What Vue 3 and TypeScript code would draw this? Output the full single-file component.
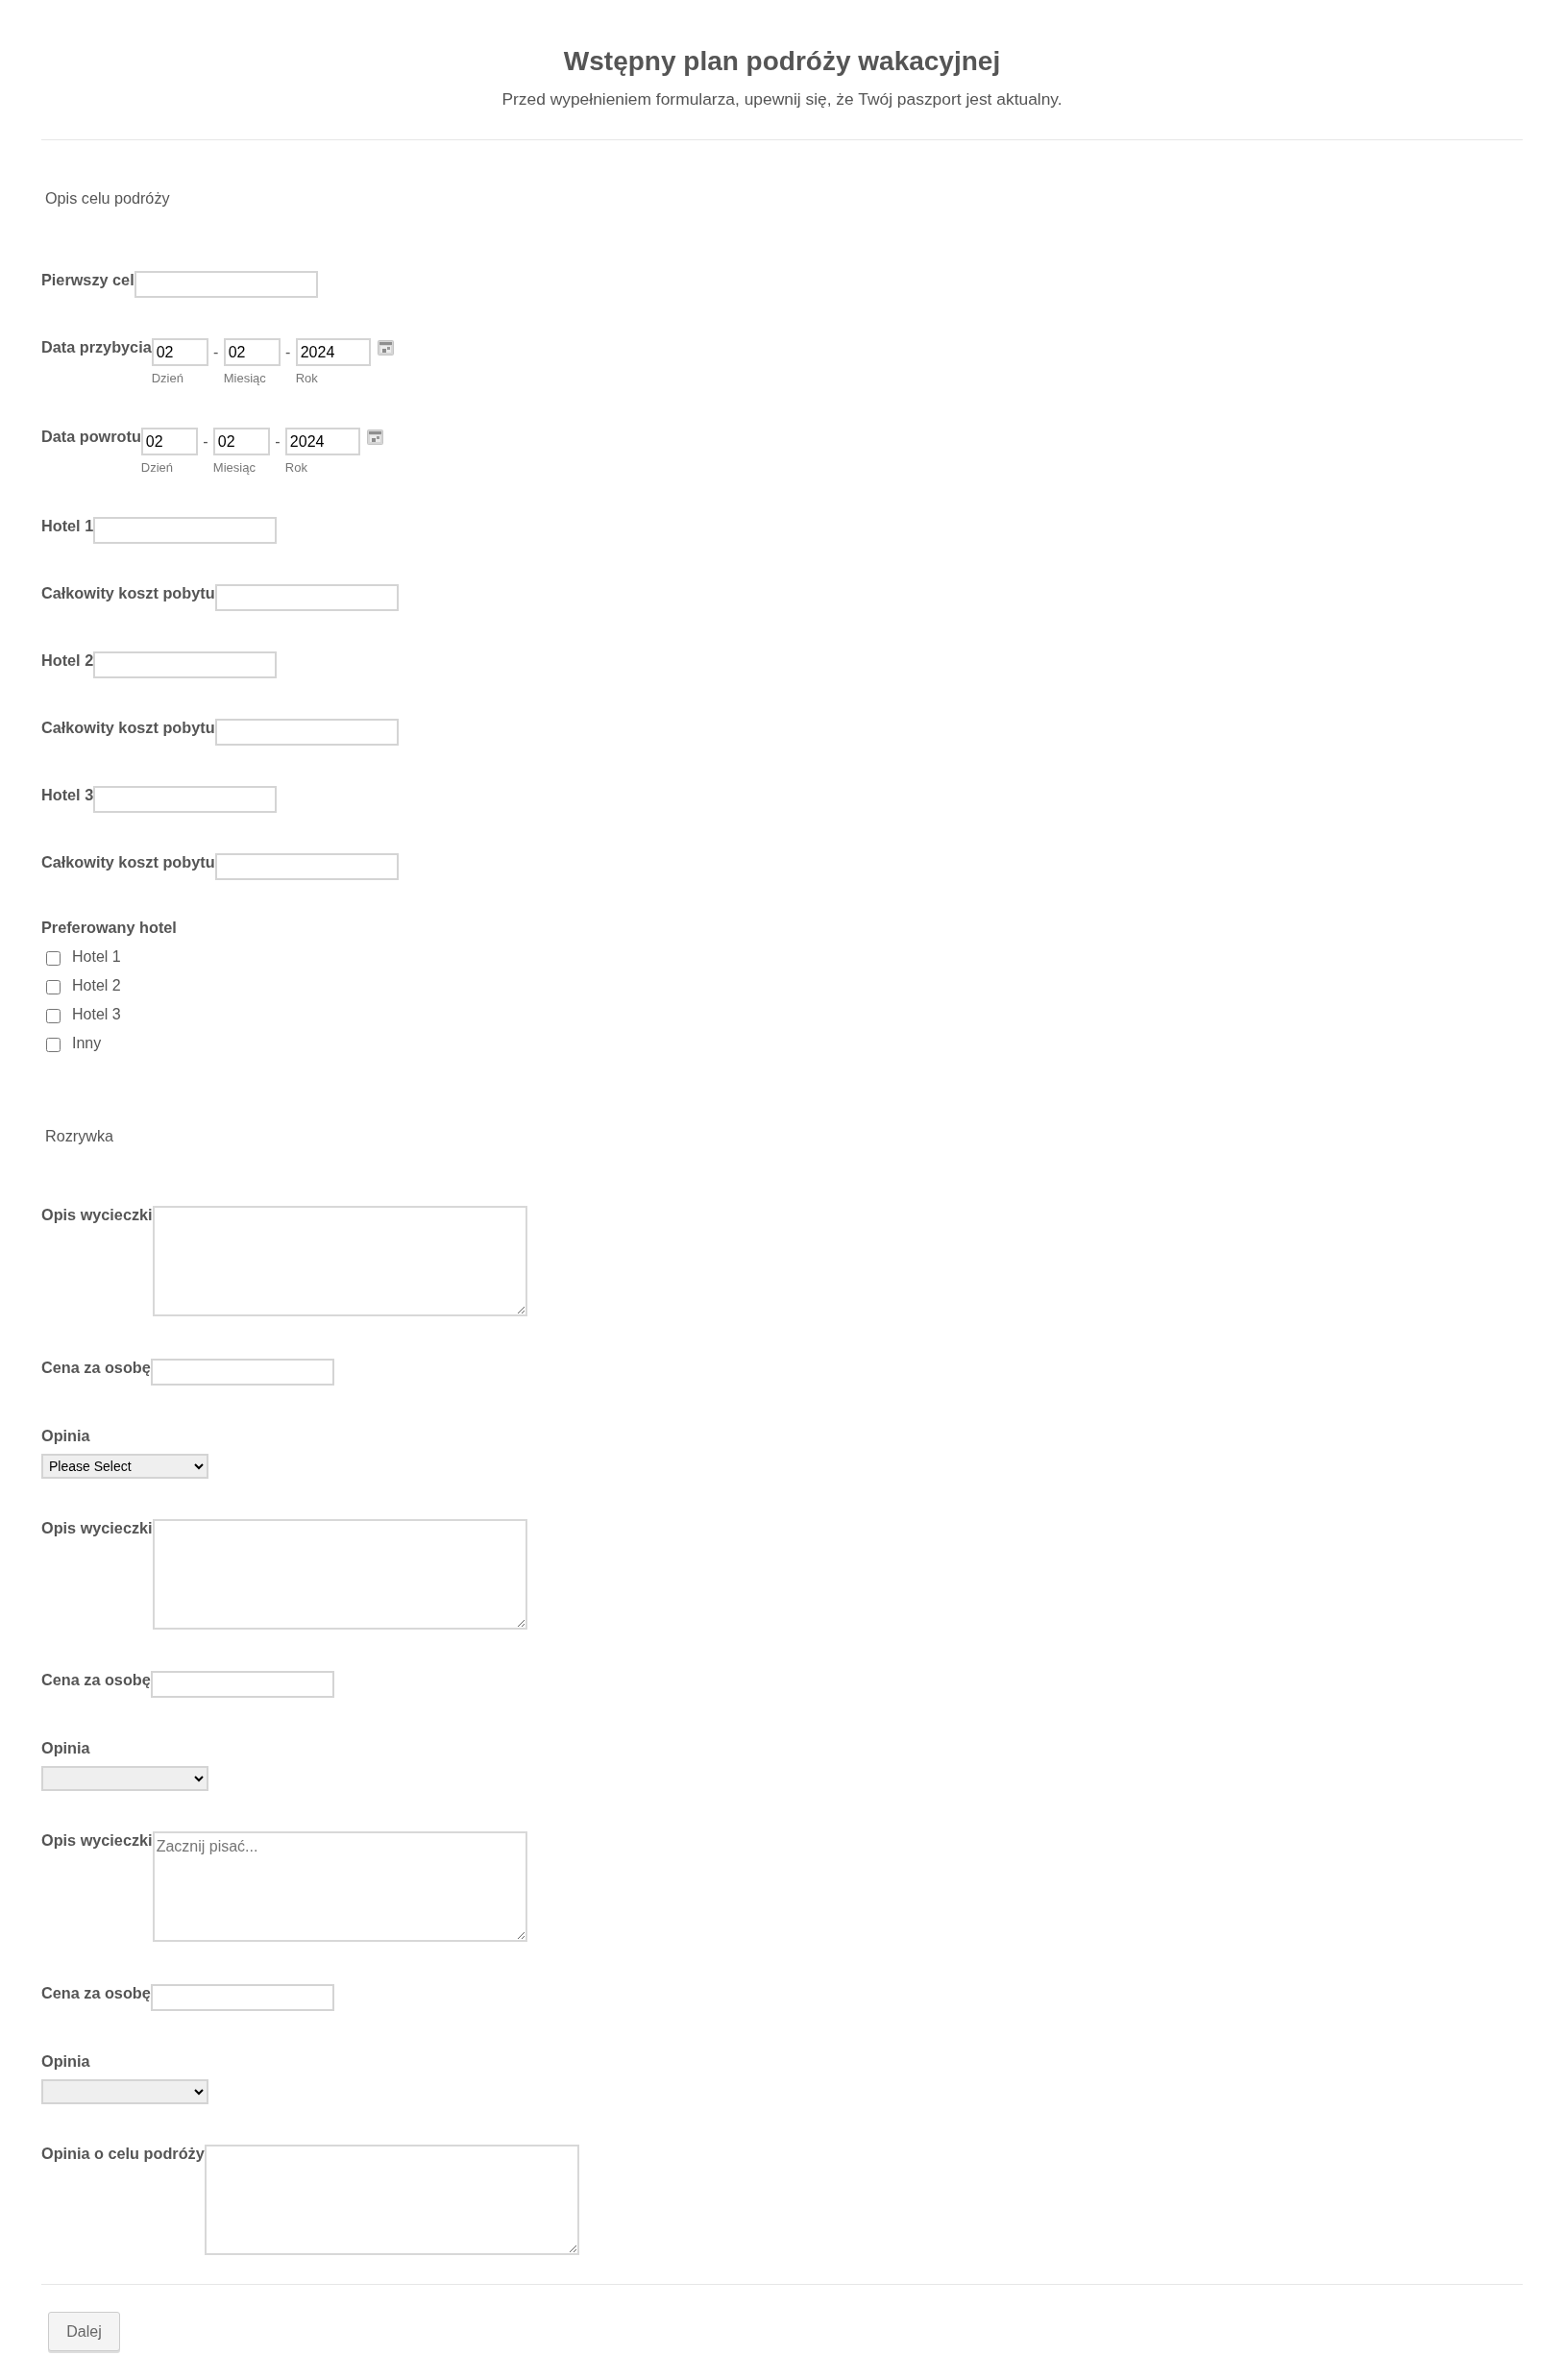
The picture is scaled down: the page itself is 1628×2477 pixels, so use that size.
<script setup lang="ts">
type Field =
  | { kind: 'text' | 'area' | 'select' | 'date'; label: string; value?: string; placeholder?: string }

const stay = (n: number): Field[] => [
  { kind: 'text', label: `Hotel ${n}` },
  { kind: 'text', label: 'Całkowity koszt pobytu' },
]

const tripFields: Field[] = [
  { kind: 'text', label: 'Pierwszy cel' },
  { kind: 'date', label: 'Data przybycia' },
  { kind: 'date', label: 'Data powrotu' },
  ...stay(1),
  ...stay(2),
  ...stay(3),
]

const funFields: Field[] = [
  { kind: 'area', label: 'Opis wycieczki' },
  { kind: 'text', label: 'Cena za osobę' },
  { kind: 'select', label: 'Opinia', value: 'Please Select' },
  { kind: 'area', label: 'Opis wycieczki' },
  { kind: 'text', label: 'Cena za osobę' },
  { kind: 'select', label: 'Opinia', value: '' },
  { kind: 'area', label: 'Opis wycieczki', placeholder: 'Zacznij pisać...' },
  { kind: 'text', label: 'Cena za osobę' },
  { kind: 'select', label: 'Opinia', value: '' },
  { kind: 'area', label: 'Opinia o celu podróży' },
]

const hotels = ['Hotel 1', 'Hotel 2', 'Hotel 3', 'Inny']
</script>

<template>
  <form class="page" @submit.prevent>
    <header class="form-head">
      <h1>Wstępny plan podróży wakacyjnej</h1>
      <p>Przed wypełnieniem formularza, upewnij się, że Twój paszport jest aktualny.</p>
    </header>

    <h2 class="section-title first">Opis celu podróży</h2>

    <div class="fields">
      <div v-for="(f, i) in tripFields" :key="i" class="row">
        <label class="row-label">{{ f.label }}</label>
        <input v-if="f.kind === 'text'" class="text-input" type="text" />
        <div v-else class="date">
          <div class="date-part">
            <input class="date-input day" type="text" value="02" />
            <span class="date-sub">Dzień</span>
          </div>
          <span class="dash">-</span>
          <div class="date-part">
            <input class="date-input day" type="text" value="02" />
            <span class="date-sub">Miesiąc</span>
          </div>
          <span class="dash">-</span>
          <div class="date-part">
            <input class="date-input year" type="text" value="2024" />
            <span class="date-sub">Rok</span>
          </div>
          <svg class="cal" width="17" height="16" viewBox="0 0 17 16" aria-hidden="true">
            <rect x="0.5" y="0.5" width="16" height="15" rx="1" fill="#d6d6d6" stroke="#c4c4c4" />
            <rect x="2" y="2" width="13" height="3" fill="#8f8f8f" />
            <rect x="3" y="6" width="11" height="7" fill="#ececec" />
            <rect x="5" y="9" width="4" height="4" fill="#8c8c8c" />
            <rect x="10" y="7" width="3" height="3" fill="#9a9a9a" />
          </svg>
        </div>
      </div>

      <div class="choices">
        <label class="row-label">Preferowany hotel</label>
        <label v-for="h in hotels" :key="h" class="choice">
          <input type="checkbox" />
          <span>{{ h }}</span>
        </label>
      </div>
    </div>

    <h2 class="section-title second">Rozrywka</h2>

    <div class="fields">
      <template v-for="(f, i) in funFields" :key="i">
        <div v-if="f.kind === 'select'" class="stack">
          <label class="row-label">{{ f.label }}</label>
          <select class="select">
            <option>{{ f.value }}</option>
          </select>
        </div>
        <div v-else class="row">
          <label class="row-label">{{ f.label }}</label>
          <input v-if="f.kind === 'text'" class="text-input" type="text" />
          <textarea v-else class="area" :placeholder="f.placeholder"></textarea>
        </div>
      </template>
    </div>

    <footer class="form-foot">
      <button type="button" class="next">Dalej</button>
    </footer>
  </form>
</template>

<style>
body {
  background: #fff;
}
</style>

<style scoped>
.page {
  height: 2477px;
  box-sizing: border-box;
  padding: 0 43px;
  font-family: "Liberation Sans", Arial, sans-serif;
  font-size: 16px;
  color: #555;
  overflow: hidden;
  will-change: transform;
}

.form-head {
  padding-top: 47px;
  height: 98px;
  box-sizing: content-box;
  border-bottom: 1px solid #e6e6e6;
  text-align: center;
}

.form-head h1 {
  margin: 0;
  font-size: 28px;
  line-height: 34px;
  font-weight: 700;
}

.form-head p {
  margin: 12px 0 0;
  font-size: 17.4px;
  line-height: 20px;
}

.section-title {
  margin: 0;
  padding-left: 4px;
  font-size: 16.2px;
  font-weight: 400;
  line-height: 20px;
}

.section-title.first {
  margin-top: 50px;
  margin-bottom: 66px;
}

.section-title.second {
  margin-top: 71px;
  margin-bottom: 63px;
}

.fields {
  display: flex;
  flex-direction: column;
  gap: 42px;
}

.row {
  display: flex;
  align-items: flex-start;
}

.row-label {
  display: block;
  font-size: 16.25px;
  font-weight: 700;
  line-height: 18px;
  white-space: nowrap;
}

.stack .row-label {
  margin-top: 1px;
}

.text-input {
  box-sizing: border-box;
  width: 191px;
  height: 28px;
  margin: 0;
  padding: 0 4px;
  border: 2px solid #d4d4d4;
  background: #fff;
  outline: none;
}

.date {
  display: flex;
  align-items: flex-start;
}

.date-part {
  display: flex;
  flex-direction: column;
}

.date-input {
  box-sizing: border-box;
  height: 29px;
  margin: 0;
  padding: 0 3px;
  border: 2px solid #d4d4d4;
  background: #fff;
  color: #000;
  font-family: inherit;
  font-size: 16px;
  outline: none;
}

.date-input.day {
  width: 59px;
}

.date-input.year {
  width: 78px;
}

.date-sub {
  margin-top: 3px;
  font-size: 13px;
  line-height: 19px;
  color: #777;
}

.dash {
  width: 16px;
  text-align: center;
  line-height: 29px;
}

.cal {
  margin: 2px 0 0 7px;
}

.choices {
  margin-top: -2px;
}

.choice {
  display: flex;
  align-items: center;
  height: 30px;
  padding-left: 5px;
}

.choices .row-label {
  margin-bottom: 7px;
}

.choice input {
  width: 15px;
  height: 15px;
  margin: 3px 12px 0 0;
}

.area {
  box-sizing: border-box;
  display: block;
  width: 390px;
  height: 115px;
  margin: 0 0 1.5px;
  padding: 5px 2px 2px;
  border: 2px solid #d8d8d8;
  background: #fff;
  font-family: inherit;
  font-size: 16px;
  outline: none;
}

.area::placeholder {
  color: #757575;
}

.select {
  display: block;
  box-sizing: border-box;
  width: 174px;
  height: 26px;
  margin: 10px 0 0;
  padding: 0 2px;
  border: 2px solid #d4d4d4;
  border-radius: 0;
  background: #efefef;
  color: #000;
  font-family: inherit;
  font-size: 14px;
  outline: none;
}

.form-foot {
  margin-top: 29px;
  padding: 28px 7px 0;
  border-top: 1px solid #e6e6e6;
}

.next {
  box-sizing: border-box;
  width: 75px;
  height: 41px;
  border: 1px solid #ccc;
  border-radius: 3px;
  background: #f4f4f4;
  box-shadow: 0 2px 0 #ddd;
  color: #666;
  font-family: inherit;
  font-size: 16px;
}
</style>
